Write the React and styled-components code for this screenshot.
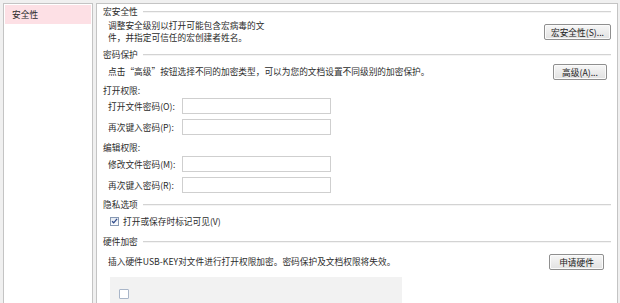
import styled, { createGlobalStyle } from 'styled-components';

const GlobalStyle = createGlobalStyle`
  html, body {
    margin: 0;
    padding: 0;
    background: #f0f0f0;
    overflow: hidden;
  }
  body {
    font-family: "Noto Sans CJK SC", "Liberation Sans", sans-serif;
    font-size: 8.7px;
    color: #2b2b2b;
  }
`;

function App() {
  return (
    <>
      <GlobalStyle />
      <Wrapper>
        <Sidebar>
          <NavItem $active>安全性</NavItem>
        </Sidebar>
        <Panel>
          <SectionHead>
            <span>宏安全性</span>
            <Rule />
          </SectionHead>
          <Row $top={2}>
            <Text>
              <Line>调整安全级别以打开可能包含宏病毒的文</Line>
              <Line>件，并指定可信任的宏创建者姓名。</Line>
            </Text>
            <Button $w={67} $mr={6}>宏安全性(S)...</Button>
          </Row>

          <SectionHead $top={5}>
            <span>密码保护</span>
            <Rule />
          </SectionHead>
          <Row $top={3}>
            <Text>点击“高级”按钮选择不同的加密类型，可以为您的文档设置不同级别的加密保护。</Text>
            <Button $w={54} $mr={10}>高级(A)...</Button>
          </Row>
          <SubTitle $top={5}>打开权限:</SubTitle>
          <Field $top={1}>
            <Label>打开文件密码(O):</Label>
            <Input type="password" />
          </Field>
          <Field $top={5}>
            <Label>再次键入密码(P):</Label>
            <Input type="password" />
          </Field>
          <SubTitle $top={7}>编辑权限:</SubTitle>
          <Field $top={2}>
            <Label>修改文件密码(M):</Label>
            <Input type="password" />
          </Field>
          <Field $top={5}>
            <Label>再次键入密码(R):</Label>
            <Input type="password" />
          </Field>

          <SectionHead $top={6}>
            <span>隐私选项</span>
            <Rule />
          </SectionHead>
          <CheckRow>
            <CheckBox>
              <svg width="8" height="8" viewBox="0 0 8 8">
                <path d="M1.2 4.2 L3.1 6.1 L6.9 1.6" fill="none" stroke="#2f4a8a" strokeWidth="1.5" />
              </svg>
            </CheckBox>
            <span>打开或保存时标记可见(V)</span>
          </CheckRow>

          <SectionHead $top={9}>
            <span>硬件加密</span>
            <Rule />
          </SectionHead>
          <Row $top={6}>
            <Text>插入硬件USB-KEY对文件进行打开权限加密。密码保护及文档权限将失效。</Text>
            <Button $w={55} $mr={13}>申请硬件</Button>
          </Row>
          <KeyBox>
            <EmptyBox />
          </KeyBox>
        </Panel>
      </Wrapper>
    </>
  );
}

export default App;

const Wrapper = styled.div`
  width: 620px;
  height: 303px;
  box-sizing: border-box;
  padding: 3px 2px 0 3px;
  display: flex;
  gap: 3px;
  overflow: hidden;
`;

const Sidebar = styled.div`
  width: 90px;
  height: 320px;
  box-sizing: border-box;
  background: #fff;
  border: 1px solid #c4c4c4;
  padding: 1px;
`;

const NavItem = styled.div`
  height: 19px;
  line-height: 19px;
  padding-left: 7px;
  background: ${(p) => (p.$active ? '#fde0e5' : 'transparent')};
`;

const Panel = styled.div`
  flex: 1;
  height: 330px;
  box-sizing: border-box;
  background: #fff;
  border: 1px solid #c4c4c4;
  padding: 2px 0 0 6px;
  display: flex;
  flex-direction: column;
`;

const SectionHead = styled.div`
  display: flex;
  align-items: center;
  gap: 5px;
  height: 12px;
  line-height: 12px;
  margin-top: ${(p) => p.$top || 0}px;
  padding-right: 6px;
`;

const Rule = styled.div`
  flex: 1;
  border-top: 1px solid #d3d3d3;
  border-bottom: 1px solid #f4f4f4;
`;

const Row = styled.div`
  display: flex;
  align-items: center;
  justify-content: space-between;
  margin-top: ${(p) => p.$top || 0}px;
  padding-left: 5px;
  min-height: 16px;
`;

const Text = styled.div`
  line-height: 12px;
  white-space: nowrap;
`;

const Line = styled.div`
  height: 12px;
  line-height: 12px;
`;

const Button = styled.button`
  width: ${(p) => p.$w}px;
  height: 16px;
  margin-right: ${(p) => p.$mr}px;
  padding: 0;
  font-family: inherit;
  font-size: 8.7px;
  color: #222;
  background: linear-gradient(#f7f7f7, #e2e2e2);
  border: 1px solid #8f8f8f;
  border-radius: 2px;
  box-shadow: inset 0 0 0 1px #fbfbfb;
`;

const SubTitle = styled.div`
  height: 12px;
  line-height: 12px;
  margin-top: ${(p) => p.$top || 0}px;
`;

const Field = styled.div`
  display: flex;
  align-items: center;
  height: 16px;
  margin-top: ${(p) => p.$top || 0}px;
  padding-left: 5px;
`;

const Label = styled.div`
  width: 74px;
  white-space: nowrap;
`;

const Input = styled.input`
  width: 149px;
  height: 16px;
  box-sizing: border-box;
  border: 1px solid #cfcfcf;
  background: #fff;
  padding: 0 3px;
  outline: none;
`;

const CheckRow = styled.div`
  display: flex;
  align-items: center;
  gap: 4px;
  height: 12px;
  margin-top: 4px;
  padding-left: 7px;
`;

const CheckBox = styled.div`
  width: 9px;
  height: 9px;
  box-sizing: border-box;
  border: 1px solid #8799b3;
  background: linear-gradient(#e6ebf3, #fafbfd);
  display: flex;
  align-items: center;
  justify-content: center;
`;

const KeyBox = styled.div`
  width: 292px;
  height: 40px;
  margin: 7px 0 0 7px;
  background: #f2f2f2;
  padding: 12px 0 0 9px;
  box-sizing: border-box;
`;

const EmptyBox = styled.div`
  width: 10px;
  height: 10px;
  box-sizing: border-box;
  border: 1px solid #a9b6c9;
  background: #fff;
  border-radius: 1px;
`;
